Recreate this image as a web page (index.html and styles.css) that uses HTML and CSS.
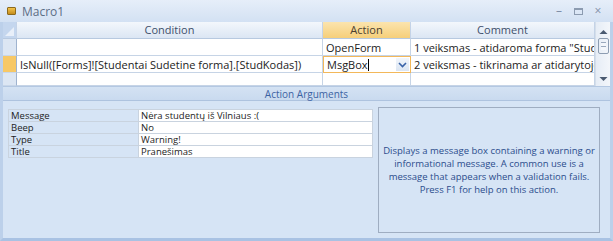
FILE: index.html
```html
<!DOCTYPE html>
<html lang="lt">
<head>
  <meta charset="UTF-8" />
  <title>Macro1</title>
  <link rel="stylesheet" href="styles.css">
</head>
<body>
  <div class="window">
    <div class="titlebar">
      <span class="title-icon"></span>
      <span class="title-text">Macro1</span>
      <div class="win-btns">
        <span class="wb">&#8211;</span>
        <span class="wb wb-max"></span>
        <span class="wb">&#215;</span>
      </div>
    </div>

    <div class="grid-area">
      <div class="macro-grid">
        <div class="hd corner"><span class="corner-mark"></span></div>
        <div class="hd">Condition</div>
        <div class="hd hd-active">Action</div>
        <div class="hd">Comment</div>

        <div class="sel"></div>
        <div class="cell"></div>
        <div class="cell">OpenForm</div>
        <div class="cell">1 veiksmas - atidaroma forma "Studentai Sudetine forma"</div>

        <div class="sel sel-current"></div>
        <div class="cell">IsNull([Forms]![Studentai Sudetine forma].[StudKodas])</div>
        <div class="cell cell-edit">
          <span>MsgBox<span class="caret"></span></span>
          <span class="drop">
            <svg width="9" height="6" viewBox="0 0 9 6"><path d="M1 1 L4.5 4.5 L8 1" fill="none" stroke="#3a63a8" stroke-width="1.6"/></svg>
          </span>
        </div>
        <div class="cell">2 veiksmas - tikrinama ar atidarytoje formoje yra studentų</div>

        <div class="sel"></div>
        <div class="cell"></div>
        <div class="cell"></div>
        <div class="cell"></div>
      </div>

      <div class="vscroll">
        <svg class="arrow" width="9" height="6" viewBox="0 0 9 6"><path d="M0.5 5 L4.5 1 L8.5 5 Z" fill="#4a5a70"/></svg>
        <div class="thumb"></div>
        <div class="track"></div>
        <svg class="arrow" width="9" height="6" viewBox="0 0 9 6"><path d="M0.5 1 L4.5 5 L8.5 1 Z" fill="#4a5a70"/></svg>
      </div>
    </div>

    <div class="args-bar">Action Arguments</div>

    <div class="lower">
      <div class="args">
        <div class="arg-name">Message</div>
        <div class="arg-val">Nėra studentų iš Vilniaus :(</div>
        <div class="arg-name">Beep</div>
        <div class="arg-val">No</div>
        <div class="arg-name">Type</div>
        <div class="arg-val">Warning!</div>
        <div class="arg-name">Title</div>
        <div class="arg-val">Pranešimas</div>
      </div>

      <div class="help">
        Displays a message box containing a warning or informational message. A common use is a message that appears when a validation fails. Press F1 for help on this action.
      </div>
    </div>
  </div>
</body>
</html>
```

FILE: styles.css
```css
:root {
  --pane: #d6e4f5;
  --line: #c6d4e6;
  --blue-text: #2b4c8c;
  --orange: #f7c866;
}

* {
  margin: 0;
  padding: 0;
  box-sizing: border-box;
}

body {
  width: 613px;
  height: 241px;
  overflow: hidden;
  font-family: "Open Sans", "Noto Sans", sans-serif;
  background: #ffffff;
}

.window {
  width: 613px;
  height: 241px;
  display: flex;
  flex-direction: column;
  background: var(--pane);
  border-left: 3px solid #bcd0ea;
  border-right: 3px solid #bcd0ea;
  border-bottom: 3px solid #a9c2e3;
}

/* title bar */

.titlebar {
  height: 22px;
  flex: none;
  display: flex;
  align-items: center;
  margin: 0 -3px;
  padding: 0 6px 0 7px;
  background: linear-gradient(to bottom, #e6eef9, #d3e1f3);
}

.title-icon {
  width: 9px;
  height: 8px;
  margin-right: 6px;
  background: linear-gradient(to bottom, #f3c34c, #c58d1c);
  border: 1px solid #8d6a1c;
  border-radius: 1px;
}

.title-text {
  font-size: 12px;
  color: #5c6d85;
}

.win-btns {
  margin-left: auto;
  display: flex;
  gap: 10px;
  align-items: center;
  padding-right: 4px;
}

.wb {
  font-size: 12px;
  color: #7f8fa6;
  width: 10px;
  text-align: center;
  line-height: 12px;
}

.wb-max {
  height: 7px;
  width: 9px;
  border: 1px solid #8c9bb0;
  border-top-width: 2px;
}

/* macro grid */

.grid-area {
  height: 64px;
  flex: none;
  display: flex;
  background: #ffffff;
  overflow: hidden;
}

.macro-grid {
  flex: 1;
  display: grid;
  grid-template-columns: 14px 306px 88px 184px;
  grid-template-rows: 17px 17px 17px 13px;
  font-size: 11px;
  color: #1c1c1c;
}

.hd {
  background: linear-gradient(to bottom, #f3f7fc, #dbe6f4);
  border-right: 1px solid #c4d3e7;
  border-bottom: 1px solid #b7c9e0;
  text-align: center;
  color: #3d4f6b;
  line-height: 16px;
}

.hd-active {
  background: linear-gradient(to bottom, #fbe4ae, #f6cf7a);
  color: #4a4030;
}

.corner {
  background: #c4d6ee;
  position: relative;
}

.corner-mark {
  position: absolute;
  right: 2px;
  bottom: 2px;
  width: 0;
  height: 0;
  border-left: 9px solid transparent;
  border-bottom: 9px solid #e8eff9;
}

.sel {
  background: #dce6f3;
  border-right: 1px solid #9fb3cf;
  border-bottom: 1px solid #c8d6e8;
}

.sel-current {
  background: var(--orange);
}

.cell {
  border-right: 1px solid var(--line);
  border-bottom: 1px solid var(--line);
  padding-left: 3px;
  line-height: 17px;
  white-space: nowrap;
  overflow: hidden;
}

.cell-edit {
  border: 1px solid #f3b85a;
  display: flex;
  justify-content: space-between;
  align-items: center;
  padding-right: 1px;
}

.caret {
  display: inline-block;
  width: 1px;
  height: 12px;
  background: #000000;
  vertical-align: -2px;
}

.drop {
  width: 13px;
  height: 13px;
  display: flex;
  align-items: center;
  justify-content: center;
  background: linear-gradient(to bottom, #f2f6fb, #dbe5f2);
}

.vscroll {
  width: 15px;
  flex: none;
  display: flex;
  flex-direction: column;
  align-items: center;
  padding: 7px 0 4px;
  background: linear-gradient(to right, #e6edf6, #f3f6fa);
  border-left: 1px solid #d4deea;
}

.thumb {
  width: 11px;
  height: 16px;
  margin-top: 3px;
  border: 1px solid #8d9db2;
  border-radius: 2px;
  background: repeating-linear-gradient(to bottom, #f4f7fb 0 3px, #9aa9bd 3px 4px);
  background-clip: content-box;
  padding: 3px 2px;
}

.track {
  flex: 1;
}

/* action arguments */

.args-bar {
  height: 15px;
  flex: none;
  text-align: center;
  font-size: 10px;
  line-height: 14px;
  color: #3d63a3;
  background: linear-gradient(to bottom, #d4e2f3, #c9daef);
  border-top: 1px solid #b4c8e2;
  border-bottom: 1px solid #aec3df;
}

.lower {
  flex: 1;
  display: flex;
  align-items: flex-start;
  padding: 6px 6px 5px 5px;
  gap: 5px;
}

.args {
  margin-top: 2px;
  width: 365px;
  display: grid;
  grid-template-columns: 130px 1fr;
  grid-auto-rows: 12px;
  font-size: 9.5px;
  line-height: 11px;
  border-top: 1px solid #c9d3df;
  border-left: 1px solid #c9d3df;
}

.arg-name,
.arg-val {
  border-right: 1px solid #c9d3df;
  border-bottom: 1px solid #c9d3df;
  padding-left: 2px;
  color: #1d1d1d;
  overflow: hidden;
  white-space: nowrap;
}

.arg-name {
  background: var(--pane);
}

.arg-val {
  background: #ffffff;
}

.help {
  width: 222px;
  height: 126px;
  border: 1px solid #9fadc1;
  display: flex;
  align-items: center;
  justify-content: center;
  text-align: center;
  padding: 0 2px;
  font-size: 9.5px;
  line-height: 13px;
  color: var(--blue-text);
}
```
